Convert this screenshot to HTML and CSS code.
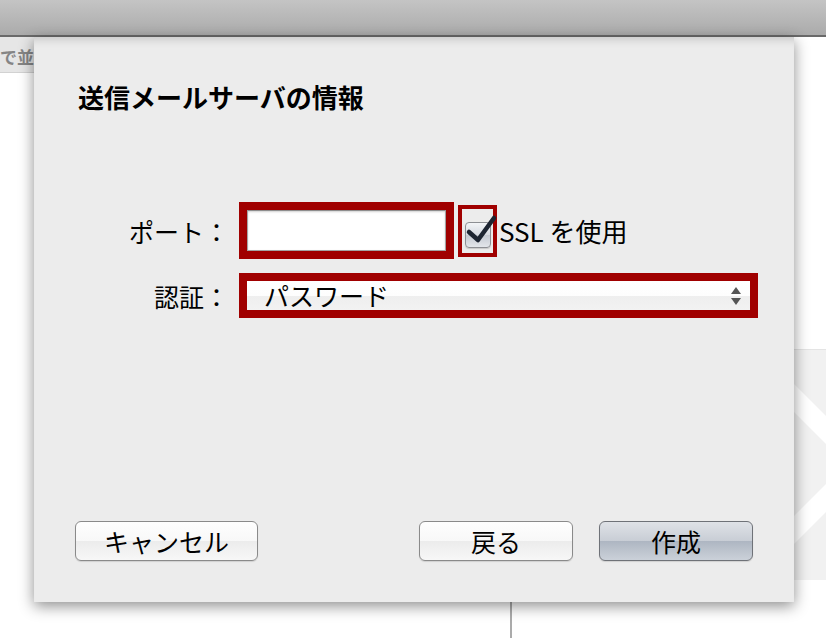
FILE: index.html
```html
<!DOCTYPE html>
<html lang="ja">
<head>
  <meta charset="UTF-8">
  <title>送信メールサーバの情報</title>
  <link rel="stylesheet" href="styles.css">
</head>
<body>
  <div class="window">
    <div class="toolbar"></div>

    <!-- content behind the sheet -->
    <div class="content">
      <div class="pane-left">
        <div class="sortbar">で並べ替え</div>
      </div>
      <div class="pane-right">
        <div class="placeholder">
          <svg width="40" height="200" viewBox="0 0 40 200">
            <path d="M0 12 L40 52 L40 80 L0 40 Z" fill="#fff"/>
            <path d="M0 188 L40 148 L40 120 L0 160 Z" fill="#fff"/>
          </svg>
        </div>
      </div>
    </div>

    <!-- the sheet -->
    <div class="sheet">
      <h1 class="sheet-title">送信メールサーバの情報</h1>

      <div class="form">
        <label class="form-label">ポート：</label>
        <div class="form-control">
          <div class="hl hl-field">
            <input class="textfield" type="text" value="">
          </div>
          <div class="hl hl-check">
            <span class="checkbox">
              <svg class="checkmark" width="40" height="40" viewBox="0 0 40 40">
                <path d="M6 19 L15 27 L31 5" fill="none" stroke="#1d2532" stroke-width="4.5" stroke-linecap="round" stroke-linejoin="round"/>
              </svg>
            </span>
          </div>
          <span class="check-label">SSL を使用</span>
        </div>

        <label class="form-label">認証：</label>
        <div class="form-control">
          <div class="hl hl-popup">
            <div class="popup">
              <span>パスワード</span>
              <span class="arrows">
                <span class="arrow-up"></span>
                <span class="arrow-down"></span>
              </span>
            </div>
          </div>
        </div>
      </div>

      <div class="buttons">
        <button class="btn btn-cancel">キャンセル</button>
        <div class="buttons-right">
          <button class="btn">戻る</button>
          <button class="btn btn-default">作成</button>
        </div>
      </div>
    </div>
  </div>
</body>
</html>
```

FILE: styles.css
```css
/* Mail account sheet over a toolbar window */
body {
  margin: 0;
  padding: 0;
  background: #fff;
  font-family: "Noto Sans CJK JP", "Noto Sans", sans-serif;
  color: #000;
  overflow: hidden;
}

.window {
  position: relative;
  width: 826px;
  height: 638px;
  overflow: hidden;
}

.toolbar {
  height: 35px;
  background: linear-gradient(#c4c4c4, #ababab);
  border-bottom: 2px solid #6a6a6a;
}

/* Content behind the sheet */
.content {
  display: flex;
  height: 601px;
}

.pane-left {
  width: 510px;
  border-right: 2px solid #ababab;
}

.sortbar {
  height: 36px;
  padding-top: 6px;
  box-sizing: border-box;
  background: #e6e6e6;
  border-bottom: 1px solid #d2d2d2;
  color: #858585;
  font-size: 17px;
  font-weight: bold;
  line-height: 28px;
  white-space: nowrap;
}

.pane-right {
  flex: 1;
  display: flex;
  justify-content: flex-end;
}

.placeholder {
  margin-top: 312px;
  width: 40px;
  height: 230px;
  background: #f1f1f1;
  border-top: 1px solid #e4e4e4;
}

.placeholder svg {
  display: block;
  margin-top: 14px;
}

/* The sheet */
.sheet {
  position: absolute;
  left: 34px;
  top: 37px;
  width: 760px;
  height: 565px;
  box-sizing: border-box;
  padding: 47px 41px 41px 41px;
  display: flex;
  flex-direction: column;
  background: #ececec;
  box-shadow: 0 4px 14px rgba(0, 0, 0, 0.45), inset 0 10px 10px -8px rgba(0, 0, 0, 0.18);
}

.sheet-title {
  margin: 0 0 0 3px;
  font-size: 26px;
  line-height: 26px;
  font-weight: bold;
}

/* Form rows */
.form {
  margin-top: 92px;
  display: grid;
  grid-template-columns: 154px auto;
  column-gap: 10px;
  row-gap: 14px;
  align-items: center;
}

.form-label {
  text-align: right;
  font-size: 25px;
  line-height: 30px;
  white-space: nowrap;
}

.form-control {
  display: flex;
  align-items: center;
}

/* Red highlight frames */
.hl {
  box-sizing: border-box;
  border: 8px solid #a00000;
}

.hl-field {
  width: 215px;
  height: 57px;
}

.hl-check {
  width: 39px;
  height: 52px;
  margin-left: 4px;
  border-width: 4px;
  display: flex;
  justify-content: center;
  align-items: flex-end;
  padding-bottom: 5px;
}

.hl-popup {
  width: 519px;
  height: 45px;
}

.textfield {
  display: block;
  width: 100%;
  height: 100%;
  box-sizing: border-box;
  margin: 0;
  border: 1px solid #a4a4a4;
  border-top-color: #8e8e8e;
  box-shadow: inset 0 1px 2px rgba(0, 0, 0, 0.18);
  background: #fff;
  outline: none;
}

.checkbox {
  position: relative;
  width: 26px;
  height: 26px;
  box-sizing: border-box;
  border: 1px solid #8d8f94;
  border-radius: 4px;
  background: linear-gradient(#f3f5f8, #d6dae1 50%, #c4c9d2 51%, #e3e6ea);
  box-shadow: 0 1px 1px rgba(0, 0, 0, 0.15);
}

.checkmark {
  position: absolute;
  left: -3px;
  top: -10px;
  overflow: visible;
}

.check-label {
  margin-left: 2px;
  font-size: 26px;
  line-height: 30px;
  white-space: nowrap;
}

.popup {
  height: 100%;
  display: flex;
  align-items: center;
  justify-content: space-between;
  padding: 0 9px 0 17px;
  background: linear-gradient(#ffffff, #fdfdfd 50%, #eeeeee 51%, #f2f2f2);
  font-size: 25px;
  line-height: 29px;
}

.arrows {
  display: flex;
  flex-direction: column;
  gap: 4px;
}

.arrow-up,
.arrow-down {
  width: 0;
  height: 0;
  border-left: 5px solid transparent;
  border-right: 5px solid transparent;
}

.arrow-up {
  border-bottom: 7px solid #555;
}

.arrow-down {
  border-top: 7px solid #555;
}

/* Bottom buttons */
.buttons {
  margin-top: auto;
  display: flex;
  justify-content: space-between;
}

.buttons-right {
  display: flex;
  gap: 26px;
}

.btn {
  width: 154px;
  height: 40px;
  padding: 0;
  border: 1px solid #8a8a8a;
  border-radius: 6px;
  background: linear-gradient(#fefefe, #f8f8f8 50%, #ececec 51%, #f7f7f7);
  box-shadow: 0 1px 1px rgba(0, 0, 0, 0.12);
  font-family: "Noto Sans CJK JP", "Noto Sans", sans-serif;
  font-size: 25px;
  line-height: 30px;
  color: #000;
}

.btn-cancel {
  width: 183px;
}

.btn-default {
  border-color: #6f7278;
  background: linear-gradient(#dfe2e7, #c8cdd5 50%, #aeb6c2 51%, #cbd1d9);
}
```
